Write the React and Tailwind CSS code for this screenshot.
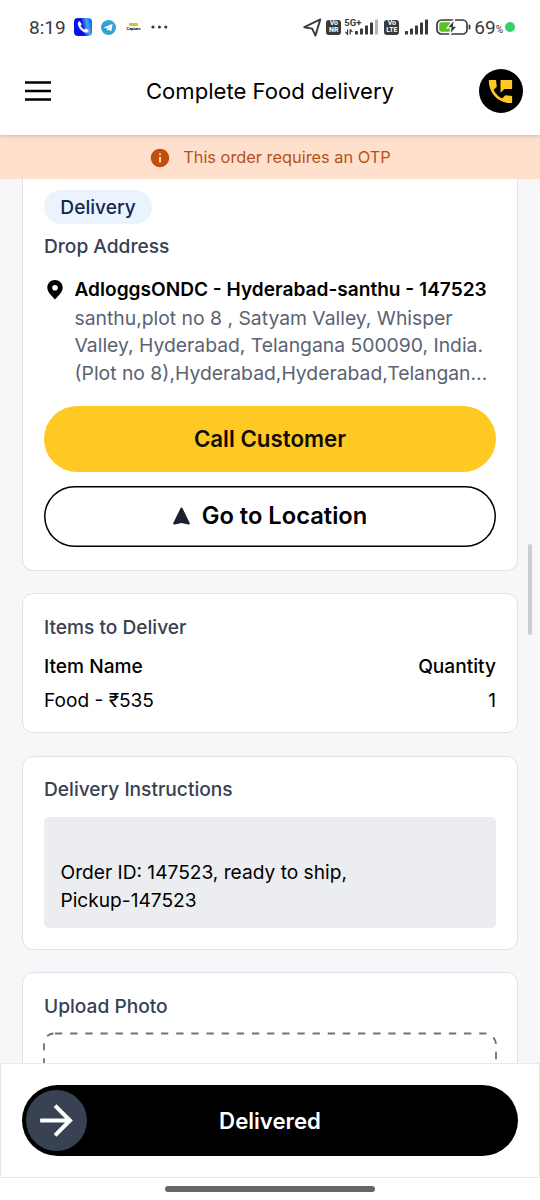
import { MdArrowForward, MdInfo } from 'react-icons/md'

const SignalBars = ({ dimLast }) => (
  <svg width="24" height="16" viewBox="0 0 24 16" fill="#3a3a3a">
    <rect x="0" y="12" width="3" height="3.5" rx="0.5" />
    <rect x="5" y="9.5" width="3" height="6" rx="0.5" />
    <rect x="10" y="6.5" width="3" height="9" rx="0.5" />
    <rect x="15" y="3.5" width="3" height="12" rx="0.5" />
    <rect x="20" y="0.5" width="3" height="15" rx="0.5" fill={dimLast ? '#b5b5b5' : '#3a3a3a'} />
  </svg>
)

const VoBadge = ({ label }) => (
  <div className="flex h-[15px] w-[15px] flex-col items-center justify-center rounded-[3px] bg-[#3a3a3a] font-['Roboto',sans-serif] text-[7px] font-bold leading-[7px] text-white">
    <span>Vo</span>
    <span>{label}</span>
  </div>
)

const StatusBar = () => (
  <div className="relative z-20 flex h-[54px] items-center bg-white pl-[29px] pr-[25px] font-['Roboto',sans-serif] text-[#3a3a3a]">
    <span className="w-[45px] pt-[1px] text-[19px] leading-none">8:19</span>
    <svg className="shrink-0" width="18" height="18" viewBox="0 0 18 18">
      <defs>
        <linearGradient id="dialer" x1="0" y1="0.6" x2="1" y2="0.4">
          <stop offset="0.45" stopColor="#0712e8" />
          <stop offset="0.75" stopColor="#4aa5f5" />
          <stop offset="1" stopColor="#0a66f0" />
        </linearGradient>
      </defs>
      <rect width="18" height="18" rx="4" fill="url(#dialer)" />
      <path d="M4.2 4.6 5.6 3.6 7.4 6.4 6.3 7.7C7 9.6 8.6 11.2 10.4 11.9L11.7 10.8 14.4 12.5 13.4 14.1C11 15.4 4.1 11.5 4.2 4.6z" fill="#fff" stroke="#fff" strokeWidth="0.8" strokeLinejoin="round" />
    </svg>
    <svg className="ml-[9px] shrink-0" width="15" height="15" viewBox="0 0 15 15">
      <circle cx="7.5" cy="7.5" r="7.5" fill="#33a1d6" />
      <path d="M2.8 7.4 11.6 3.8 10.2 11.4 7.4 9.4 6.1 10.7 5.9 8.5z" fill="#fff" />
      <path d="M5.9 8.5 9.8 5.4 6.6 9z" fill="#a9d6ec" />
    </svg>
    <div className="ml-[10px] flex w-[15px] shrink-0 flex-col items-center">
      <div className="h-[3px] w-[9px] rounded-[1px] bg-[#e8b52c]" />
      <span className="text-[4px] font-bold leading-[5px] text-black">Captain</span>
    </div>
    <svg className="ml-[10px] shrink-0" width="18" height="4" viewBox="0 0 18 4" fill="#3a3a3a">
      <circle cx="2" cy="2" r="1.6" />
      <circle cx="8.4" cy="2" r="1.6" />
      <circle cx="14.8" cy="2" r="1.6" />
    </svg>

    <div className="ml-auto flex items-center">
      <svg width="19" height="19" viewBox="0 0 19 19" fill="none" stroke="#3a3a3a" strokeWidth="1.9" strokeLinejoin="round">
        <path d="M1.3 9.2 17.3 1.4 12.4 17.6 9.2 10.6z" />
      </svg>
      <div className="ml-[4px]"><VoBadge label="NR" /></div>
      <div className="relative ml-[14px] h-[16px]">
        <SignalBars dimLast />
        <span className="absolute -left-[11px] -top-[1px] bg-white text-[9.5px] font-bold leading-[9px]">5G+</span>
        <svg className="absolute -left-[10px] top-[10px]" width="8" height="6" viewBox="0 0 8 6" fill="none" stroke="#3a3a3a" strokeWidth="1.2">
          <path d="M0.5 3 2.6 5.4V0.4M7.4 3 5.2 0.6V5.6" />
        </svg>
      </div>
      <div className="ml-[5px]"><VoBadge label="LTE" /></div>
      <div className="ml-[6px]"><SignalBars /></div>
      <svg className="ml-[7px]" width="35" height="16" viewBox="0 0 35 16">
        <rect x="1" y="1" width="30" height="14" rx="4.5" fill="#fff" stroke="#3a3a3a" strokeWidth="1.7" />
        <rect x="3.2" y="3.2" width="12" height="9.6" rx="2.5" fill="#58c322" />
        <path d="M18.5 0 11.2 8.8H15L13.6 16 21.4 7.2H17.5z" fill="#3a3a3a" stroke="#fff" strokeWidth="1.2" />
        <rect x="32.6" y="5.5" width="1.8" height="5" rx="0.9" fill="#3a3a3a" />
      </svg>
      <span className="ml-[3px] pt-[1px] text-[19px] leading-none">69</span>
      <span className="-mr-[1px] pt-[6px] text-[10px] leading-none">%</span>
      <span className="ml-[3px] h-[10px] w-[10px] rounded-full bg-[#35cf6c]" />
    </div>
  </div>
)

const Header = () => (
  <header className="relative z-10 flex h-[81px] items-center justify-between bg-white pb-[7px] pl-[25px] pr-[17px] pt-0 shadow-[0_1px_4px_rgba(0,0,0,0.18)]">
    <button className="w-[36px]">
      <svg width="26" height="20" viewBox="0 0 26 20" stroke="#000" strokeWidth="2.6">
        <path d="M0 1.5H26M0 10H26M0 18.5H26" />
      </svg>
    </button>
    <h1 className="pt-[2px] text-[22.1px] font-normal text-black">Complete Food delivery</h1>
    <button className="flex h-11 w-11 items-center justify-center rounded-full bg-black">
      <svg width="31" height="31" viewBox="0 0 24 24" fill="#ffc923">
        <path d="M21 15.46l-5.27-.61-2.52 2.52c-2.83-1.44-5.15-3.75-6.59-6.59l2.53-2.53L8.54 3H3.03C2.45 13.18 10.82 21.55 21 20.97v-5.51zM12 3v10l3-3h6V3h-9z" />
      </svg>
    </button>
  </header>
)

const Card = ({ title, children, className = '' }) => (
  <section className={`rounded-[11px] border border-[#dfe2e7] bg-white px-[21px] ${className}`}>
    {title && <h2 className="text-[19.15px] font-medium leading-[27px] text-[#374151]">{title}</h2>}
    {children}
  </section>
)

const DropCard = () => (
  <Card className="h-[391.5px] rounded-t-none border-t-0 pt-[11px]">
    <span className="flex h-[34px] w-[108px] items-center justify-center rounded-full bg-[#ebf3ff] pt-[1px] text-[19.15px] font-medium text-[#12294f]">
      Delivery
    </span>
    <h2 className="mt-[9px] text-[19.15px] font-medium leading-[27px] text-[#374151]">Drop Address</h2>
    <div className="mt-[16px] flex">
      <svg className="ml-[3px] mt-[4px] shrink-0" width="16" height="20" viewBox="0 0 16 20">
        <path fillRule="evenodd" fill="#000" d="M8 0C3.6 0 .3 3.4.3 7.6.3 12.6 5 16.2 8 19.5c3-3.3 7.7-6.9 7.7-11.9C15.7 3.4 12.4 0 8 0zM8 5a2.8 2.8 0 1 1 0 5.6A2.8 2.8 0 0 1 8 5z" />
      </svg>
      <div className="ml-[11.5px] whitespace-nowrap text-[19.1px] leading-[27.5px]">
        <p className="font-semibold text-black">AdloggsONDC - Hyderabad-santhu - 147523</p>
        <p className="mt-[1px] text-[19.33px] text-[#5a6371]">
          santhu,plot no 8 , Satyam Valley, Whisper<br />
          Valley, Hyderabad, Telangana 500090, India.<br />
          (Plot no 8),Hyderabad,Hyderabad,Telangan...
        </p>
      </div>
    </div>
    <button className="mt-[19px] flex h-[66px] w-full items-center justify-center rounded-full bg-[#ffc923] text-[22.3px] font-semibold text-[#0f0d02]">
      Call Customer
    </button>
    <button className="mt-[13.5px] flex h-[61px] w-full items-center justify-center gap-3 rounded-full text-[23.7px] font-semibold text-black shadow-[inset_0_0_0_1.5px_#000]">
      <svg width="17" height="18" viewBox="0 0 17 18" fill="#1a202c">
        <path d="M8.5 0.5C8.9 0.5 9.2 0.7 9.4 1.1L16.6 15.7C17.1 17 16.4 17.8 15.2 17.5L8.5 16 1.8 17.5C.6 17.8-.1 17 .4 15.7L7.6 1.1C7.8.7 8.1.5 8.5.5z" />
      </svg>
      Go to Location
    </button>
  </Card>
)

const ItemsCard = () => (
  <Card title="Items to Deliver" className="h-[140px] pt-[19.5px]">
    <div className="mt-[12px] flex justify-between text-[19.15px] font-medium leading-[27px] text-black">
      <span>Item Name</span>
      <span>Quantity</span>
    </div>
    <div className="mt-[7px] flex justify-between text-[19.1px] leading-[27px] text-black">
      <span>Food - ₹535</span>
      <span>1</span>
    </div>
  </Card>
)

const InstructionsCard = () => (
  <Card title="Delivery Instructions" className="h-[194px] pt-[19.5px]">
    <div className="mt-[14px] h-[111px] rounded-[5px] bg-[#ecedf1] px-[16.5px] pt-[42px] text-[19.15px] leading-[27.5px] text-black">
      <p>Order ID: 147523, ready to ship,</p>
      <p>Pickup-147523</p>
    </div>
  </Card>
)

const UploadCard = () => (
  <Card title="Upload Photo" className="h-[240px] pt-[19.5px]">
    <svg className="mt-[12px] overflow-visible" width="452" height="160" fill="none" stroke="#6b7280" strokeWidth="1.8">
      <path d="M11 1.5H441A11 11 0 0 1 452 12.5V150" strokeDasharray="7.3 7.85" />
      <path d="M9.5 1.5A10 10 0 0 0 0 11.5V150" strokeDasharray="7 8" />
    </svg>
  </Card>
)

const BottomBar = () => (
  <div className="h-[115px] border border-[#e6e9ed] bg-white px-[21px] pt-[21px]">
    <button className="relative flex h-[71px] w-full items-center justify-center rounded-full bg-black text-[22.2px] font-semibold text-white">
      <span className="absolute left-[4px] top-[5px] flex h-[61px] w-[61px] items-center justify-center rounded-full bg-[#384252]">
        <MdArrowForward size={49} />
      </span>
      Delivered
    </button>
  </div>
)

export default function App() {
  return (
    <div className="flex h-[1200px] w-[540px] flex-col overflow-hidden bg-white font-['Inter',sans-serif]">
      <StatusBar />
      <Header />
      <div className="flex h-[44px] items-center justify-center gap-3 bg-[#fee0cc] pt-[1px] text-[16.36px] text-[#b8501c]">
        <MdInfo className="text-[#c24e0c]" size={22} />
        This order requires an OTP
      </div>
      <main className="relative h-[884px] overflow-hidden bg-[#f5f7f9] px-[22px]">
        <div className="flex flex-col gap-[22.5px]">
          <DropCard />
          <ItemsCard />
          <InstructionsCard />
          <UploadCard />
        </div>
        <div className="absolute right-[8px] top-[365px] h-[91px] w-[4px] rounded-full bg-[#cccdd0]" />
      </main>
      <BottomBar />
      <div className="flex flex-1 justify-center pt-[8px]">
        <div className="h-[6px] w-[210px] rounded-full bg-[#666]" />
      </div>
    </div>
  )
}
